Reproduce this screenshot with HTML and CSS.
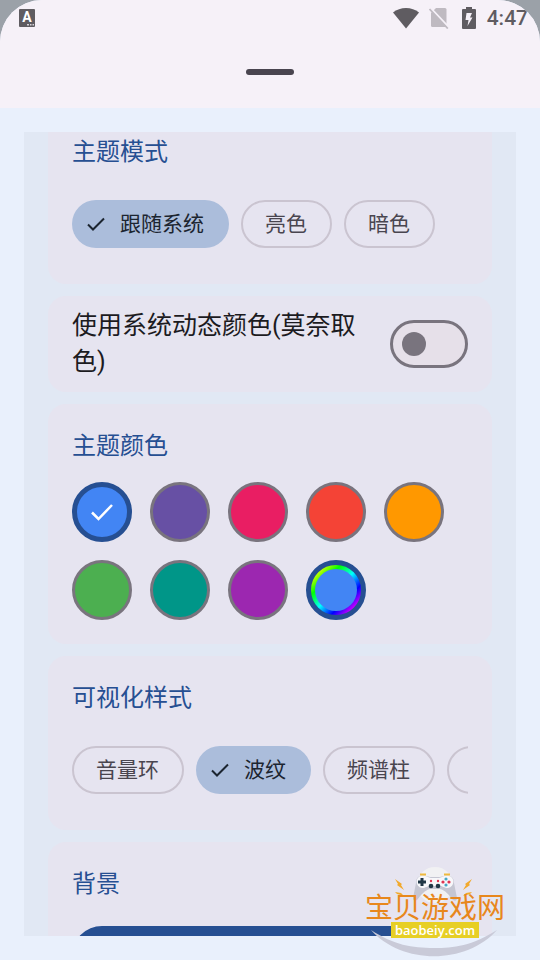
FILE: index.html
```html
<!DOCTYPE html>
<html lang="zh-CN">
<head>
<meta charset="utf-8">
<meta name="viewport" content="width=device-width, initial-scale=1">
<title>主题模式</title>
<link rel="stylesheet" href="styles.css">
</head>
<body>
<div class="sheet">
  <header class="sheet-header">
    <div class="status">
      <svg class="status-app" width="16" height="18" viewBox="0 0 16 18" aria-hidden="true">
        <rect width="16" height="18" rx="1" fill="#5f5c61"/>
        <text x="8" y="13" text-anchor="middle" class="app-letter">A</text>
        <path d="M8 15h2v1.500H8zM11 15h1.500v1.500H11zM13.500 15H15v1.500h-1.500z" fill="#d8d4da"/>
      </svg>
      <svg width="26" height="22" viewBox="0 0 26 22" aria-hidden="true">
        <path d="M0 5.500C7-.6 19-.6 26 5.500L13 21.500z" fill="#5f5c61"/>
      </svg>
      <svg width="22" height="22" viewBox="0 0 22 22" aria-hidden="true">
        <path d="M7 1h9q1.500 0 1.500 1.500V20H3.500Q2 20 2 18.500V6z" fill="#bfbac1"/>
        <path d="M1.500 1L20 20.500" stroke="#f6f1f8" stroke-width="2"/>
        <path d="M.5 2L18.800 21.500" stroke="#bfbac1" stroke-width="1.800"/>
      </svg>
      <svg width="16" height="22" viewBox="0 0 16 22" aria-hidden="true">
        <path d="M5 0h6v2h3q1 0 1 1v18q0 1-1 1H2q-1 0-1-1V3q0-1 1-1h3z" fill="#5f5c61"/>
        <path d="M5.500 6h5.500L9 10.500h2.500L6.500 19l1-6H4.500z" fill="#f6f1f8"/>
      </svg>
      <span class="clock">4:47</span>
    </div>
    <div class="handle-row"><span class="handle"></span></div>
  </header>

  <main class="viewport">
    <div class="cards">
      <section class="card card-chips">
        <h2 class="title">主题模式</h2>
        <div class="chips">
          <button type="button" class="chip selected" aria-pressed="true"><svg class="tick" viewBox="0 0 18 14" aria-hidden="true"><path d="M1 7.500L6 12.500 17 1.500"/></svg>跟随系统</button>
          <button type="button" class="chip">亮色</button>
          <button type="button" class="chip">暗色</button>
        </div>
      </section>

      <section class="card card-switch">
        <label class="switch-label" for="dynamic">使用系统动态颜色(莫奈取色)</label>
        <input class="switch" type="checkbox" role="switch" id="dynamic">
      </section>

      <section class="card">
        <h2 class="title">主题颜色</h2>
        <div class="swatches">
          <button type="button" class="swatch blue active" aria-label="蓝" aria-pressed="true"><svg class="swatch-tick" viewBox="0 0 24 18" aria-hidden="true"><path d="M2 9.500L8.500 16 22 2"/></svg></button>
          <button type="button" class="swatch violet" aria-label="紫罗兰"></button>
          <button type="button" class="swatch pink" aria-label="粉"></button>
          <button type="button" class="swatch red" aria-label="红"></button>
          <button type="button" class="swatch orange" aria-label="橙"></button>
          <button type="button" class="swatch green" aria-label="绿"></button>
          <button type="button" class="swatch teal" aria-label="青"></button>
          <button type="button" class="swatch purple" aria-label="紫"></button>
          <button type="button" class="swatch custom" aria-label="自定义"><span class="custom-core"></span></button>
        </div>
      </section>

      <section class="card card-chips">
        <h2 class="title">可视化样式</h2>
        <div class="chips">
          <button type="button" class="chip">音量环</button>
          <button type="button" class="chip selected" aria-pressed="true"><svg class="tick" viewBox="0 0 18 14" aria-hidden="true"><path d="M1 7.500L6 12.500 17 1.500"/></svg>波纹</button>
          <button type="button" class="chip">频谱柱</button>
          <button type="button" class="chip chip-more" aria-label="更多"></button>
        </div>
      </section>

      <section class="card">
        <h2 class="title">背景</h2>
        <button type="button" class="action" aria-label="背景"></button>
      </section>
    </div>
  </main>
</div>

<div class="watermark">
  <svg class="wm-art" width="142" height="92" viewBox="0 0 142 92" aria-hidden="true">
    <path d="M5 64C36 99 100 99 131 64C106 80 88 82 68 82C46 82 28 79 5 64z" fill="#c9cad8"/>
    <circle cx="69" cy="19" r="18" fill="#f1f1f3"/>
    <path d="M50 17C50 8 58 9 64 11H74C80 9 88 8 88 17L91 32Q91 36 87 34C83 29 79 24 74 23H64C59 24 55 29 51 34Q47 36 47 32z" fill="#c5c6d2"/>
    <path d="M55 10C60 9 62 12 65 12H73C76 12 78 9 83 10C89 11 89 21 82 22C78 22 77 20 74 20H64C61 20 60 22 56 22C49 21 49 11 55 10z" fill="#f7f7fa"/>
    <path d="M54 8.500h6M78 8.500h6" stroke="#efb93d" stroke-width="2"/>
    <path d="M56 12v8M52 16h8" stroke="#203746" stroke-width="3"/>
    <g fill="#203746"><circle cx="65" cy="20" r="2.300"/><circle cx="72" cy="20" r="2.300"/></g>
    <g fill="#df3551"><circle cx="65" cy="15" r="1.200"/><circle cx="72" cy="15" r="1.200"/><circle cx="77" cy="16" r="1.600"/><circle cx="83" cy="16" r="1.600"/></g>
    <g fill="#48a9c5"><circle cx="80" cy="13" r="1.600"/><circle cx="80" cy="19" r="1.600"/></g>
    <path d="M29 13l7 5-1 1 3 5-7-5 1-1zM29 26l6 1 3 3-7-2zM106 13l-7 5 1 1-3 5 7-5-1-1zM106 26l-6 1-3 3 7-2z" fill="#f2a92c"/>
  </svg>
  <span class="wm-name">宝贝游戏网</span>
  <span class="wm-url">baobeiy.com</span>
</div>
</body>
</html>
```
FILE: styles.css
```css
* {
  box-sizing: border-box;
}

body {
  margin: 0;
  background: #9ba1a8;
  font-family: Roboto, "Noto Sans CJK SC", sans-serif;
  color: #1c1b1f;
}

button {
  margin: 0;
  padding: 0;
  border: 0;
  font: inherit;
  color: inherit;
}

.sheet {
  display: flex;
  flex-direction: column;
  height: 100vh;
  border-radius: 42px 42px 0 0;
  overflow: hidden;
  background: #e9f0fc;
}

.sheet-header {
  background: #f6f1f8;
}

.status {
  display: flex;
  align-items: center;
  gap: 10px;
  height: 36px;
  padding: 0 12px 0 19px;
}

.status-app {
  margin-right: auto;
}

.app-letter {
  font: 700 14px Roboto, sans-serif;
  fill: #fff;
}

.clock {
  font-size: 21px;
  font-weight: 500;
  line-height: 24px;
  color: #5f5c61;
}

.handle-row {
  display: flex;
  align-items: center;
  justify-content: center;
  height: 72px;
}

.handle {
  width: 48px;
  height: 6px;
  border-radius: 3px;
  background: #49454f;
}

.viewport {
  flex: 1;
  min-height: 0;
  margin: 24px;
  padding: 0 24px;
  overflow: hidden;
  background: #e1e8f4;
}

/* The list is shown slightly scrolled. */
.cards {
  display: flex;
  flex-direction: column;
  gap: 12px;
  margin-top: -22px;
}

.card {
  padding: 24px;
  border-radius: 18px;
  background: #e6e4f0;
}

.title {
  margin: 0 0 18px;
  font-size: 24px;
  font-weight: 400;
  line-height: 36px;
  color: #264f92;
}

.card-chips {
  padding-bottom: 36px;
}

.card-chips .title {
  margin-bottom: 30px;
}

.chips {
  display: flex;
  gap: 12px;
  overflow: hidden;
}

.chip {
  display: flex;
  flex: none;
  align-items: center;
  height: 48px;
  padding: 0 23px 0 22px;
  border: 2px solid #cac4d0;
  border-radius: 24px;
  background: transparent;
  font-size: 21px;
  line-height: 30px;
  color: #49454f;
}

.chip.selected {
  padding: 0 25px 0 15px;
  border: 0;
  background: #abbddb;
  color: #1c2530;
}

.chip-more {
  width: 91px;
}

.tick {
  width: 18px;
  height: 14px;
  margin-right: 15px;
  fill: none;
  stroke: #1c2530;
  stroke-width: 2;
}

.card-switch {
  display: flex;
  align-items: center;
  gap: 24px;
  padding: 12px 24px;
}

.switch-label {
  flex: 1;
  font-size: 25px;
  line-height: 36px;
}

.switch {
  display: flex;
  flex: none;
  align-items: center;
  appearance: none;
  width: 78px;
  height: 48px;
  margin: 0;
  padding: 0 9px;
  border: 3px solid #79747e;
  border-radius: 24px;
  background: #e6e0e9;
}

.switch::before {
  content: "";
  width: 24px;
  height: 24px;
  border-radius: 50%;
  background: #79747e;
}

.switch:checked {
  justify-content: flex-end;
}

.swatches {
  display: flex;
  flex-wrap: wrap;
  gap: 18px;
}

.swatch {
  display: flex;
  align-items: center;
  justify-content: center;
  width: 60px;
  height: 60px;
  border: 3px solid #79747e;
  border-radius: 50%;
}

.swatch.active,
.swatch.custom {
  border: 5px solid #264f92;
}

.blue { background: #4285f4; }
.violet { background: #6750a4; }
.pink { background: #e91e63; }
.red { background: #f44336; }
.orange { background: #ff9800; }
.green { background: #4caf50; }
.teal { background: #009688; }
.purple { background: #9c27b0; }

.custom {
  background: linear-gradient(135deg, red, yellow, lime, cyan, blue, magenta, red) border-box;
}

.custom-core {
  width: 42px;
  height: 42px;
  border-radius: 50%;
  background: #4285f4;
}

.swatch-tick {
  width: 24px;
  height: 18px;
  fill: none;
  stroke: #fff;
  stroke-width: 2.500;
}

.card .action {
  display: block;
  width: 100%;
  height: 60px;
  margin-top: 24px;
  border-radius: 30px;
  background: #264f92;
}

.watermark {
  position: absolute;
  right: 32px;
  bottom: 2px;
  display: flex;
  flex-direction: column;
  align-items: center;
  gap: 2px;
  width: 142px;
  height: 92px;
  padding: 26px 4px 0 0;
}

.wm-art {
  position: absolute;
  top: 0;
  left: 0;
}

.wm-name {
  position: relative;
  font: 400 28px/28px "Noto Sans CJK SC", sans-serif;
  white-space: nowrap;
  color: #e8871c;
}

.wm-url {
  position: relative;
  padding: 0 4px;
  background: #e7cf24;
  font: 600 13px/16px "Open Sans", sans-serif;
  color: #fff;
}
```
